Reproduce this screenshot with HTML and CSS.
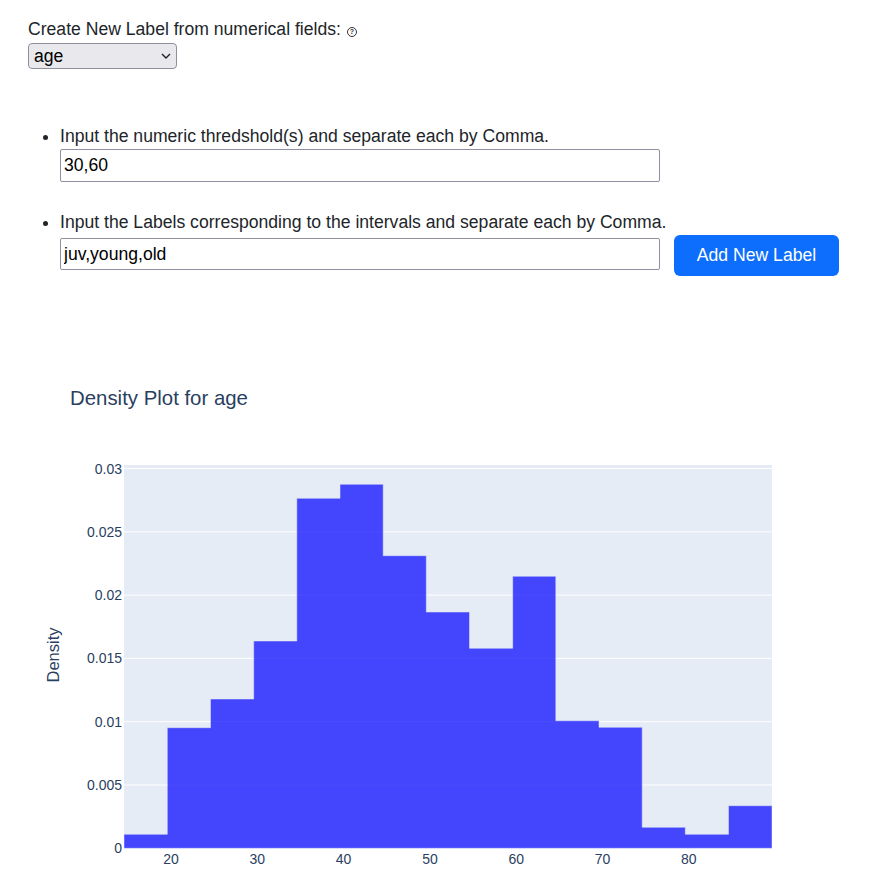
FILE: index.html
```html
<!DOCTYPE html>
<html lang="en">
<head>
<meta charset="utf-8">
<title>Create New Label</title>
<link rel="stylesheet" href="styles.css">
</head>
<body>
<main class="app">
  <section class="form">
    <label class="field-label" for="field">Create New Label from numerical fields: <span class="help">?</span></label>
    <div class="select-wrap">
      <select id="field" class="select">
        <option>age</option>
      </select>
      <svg class="chevron" width="10" height="6" viewBox="0 0 10 6"><path d="M1 1 L5 5 L9 1" fill="none" stroke="#222" stroke-width="1.4"/></svg>
    </div>
    <ul class="steps">
      <li class="step">
        <div class="step-text">Input the numeric thredshold(s) and separate each by Comma.</div>
        <input class="text-input" type="text" value="30,60">
      </li>
      <li class="step">
        <div class="step-text">Input the Labels corresponding to the intervals and separate each by Comma.</div>
        <div class="step-row">
          <input class="text-input" type="text" value="juv,young,old">
          <button class="btn">Add New Label</button>
        </div>
      </li>
    </ul>
  </section>
  <section class="chart">
    <svg class="plot" width="877" height="518" viewBox="0 0 877 518">
      <text class="title" x="70" y="45">Density Plot for age</text>
      <rect x="124" y="105" width="648" height="383.3" fill="#E5ECF6"/>
      <g stroke="#ffffff" stroke-width="1">
        <line x1="124" x2="772" y1="108.5" y2="108.5"/>
        <line x1="124" x2="772" y1="171.8" y2="171.8"/>
        <line x1="124" x2="772" y1="235.1" y2="235.1"/>
        <line x1="124" x2="772" y1="298.4" y2="298.4"/>
        <line x1="124" x2="772" y1="361.7" y2="361.7"/>
        <line x1="124" x2="772" y1="425" y2="425"/>
      </g>
      <path opacity="0.7" fill="#0000ff" stroke="#E5ECF6" stroke-width="0.5"
        d="M124 488.3 V474.3 H167.3 V367.7 H210.5 V339 H253.7 V281 H296.8 V138.3 H340 V124.3 H383.2 V195.7 H426.3 V252 H469.5 V288.3 H512.7 V216.3 H555.8 V360.7 H599 V367.3 H642.2 V467.3 H685.3 V474.3 H728.5 V445.7 H772 V488.3 Z"/>
      <g class="ytick" text-anchor="end">
        <text x="122" y="113.5">0.03</text>
        <text x="122" y="176.8">0.025</text>
        <text x="122" y="240.1">0.02</text>
        <text x="122" y="303.4">0.015</text>
        <text x="122" y="366.7">0.01</text>
        <text x="122" y="430">0.005</text>
        <text x="122" y="493.3">0</text>
      </g>
      <g class="xtick" text-anchor="middle">
        <text x="171" y="504">20</text>
        <text x="257.3" y="504">30</text>
        <text x="343.6" y="504">40</text>
        <text x="430" y="504">50</text>
        <text x="516.2" y="504">60</text>
        <text x="602.5" y="504">70</text>
        <text x="688.8" y="504">80</text>
      </g>
      <text class="ytitle" x="53" y="295" text-anchor="middle" transform="rotate(-90 53 295)" dy="6">Density</text>
    </svg>
  </section>
</main>
</body>
</html>
```
FILE: styles.css
```css
html, body {
  margin: 0;
  padding: 0;
  overflow: hidden;
  background: #ffffff;
}

body {
  font-family: "Liberation Sans", Arial, sans-serif;
  font-size: 17.6px;
  color: #212529;
}

.form {
  padding: 19px 28px 0;
  display: flex;
  flex-direction: column;
  align-items: flex-start;
}

.field-label {
  display: block;
  line-height: 21px;
  height: 21px;
}

.help {
  display: inline-block;
  width: 8px;
  height: 8px;
  border: 1px solid #333;
  border-radius: 50%;
  font-size: 7px;
  line-height: 8px;
  text-align: center;
  vertical-align: 1px;
  margin-left: 1px;
  color: #333;
  font-weight: bold;
}

.select-wrap {
  position: relative;
  margin-top: 3px;
  width: 149px;
  height: 26px;
}

.select {
  appearance: none;
  -webkit-appearance: none;
  width: 149px;
  height: 26px;
  box-sizing: border-box;
  background: #e9e9ed;
  border: 1px solid #8f8f9d;
  border-radius: 4px;
  font-family: "Liberation Sans", Arial, sans-serif;
  font-size: 17.6px;
  color: #000;
  padding: 0 0 0 5px;
  margin: 0;
}

.chevron {
  position: absolute;
  right: 6px;
  top: 10px;
  pointer-events: none;
}

.steps {
  margin: 56px 0 0;
  padding: 0 0 0 32px;
  list-style: disc;
}

.step {
  margin-bottom: 29px;
}

.step:last-child {
  margin-bottom: 0;
}

.step-text {
  line-height: 22px;
  height: 22px;
  color: #212529;
}

.text-input {
  display: block;
  box-sizing: border-box;
  width: 600px;
  height: 33px;
  margin: 2px 0 0;
  padding: 0 3px;
  border: 1px solid #8f8f9d;
  border-radius: 2px;
  font-family: "Liberation Sans", Arial, sans-serif;
  font-size: 17.6px;
  color: #000;
  background: #fff;
}

.step-row {
  display: flex;
  align-items: flex-start;
  gap: 14px;
  margin-top: 2px;
}

.step-row .text-input {
  margin-top: 3px;
  height: 32px;
}

.btn {
  box-sizing: border-box;
  width: 165px;
  height: 41px;
  padding: 0;
  border: none;
  border-radius: 6px;
  background: #0d6efd;
  color: #ffffff;
  font-family: "Liberation Sans", Arial, sans-serif;
  font-size: 17.6px;
}

.chart {
  margin-top: 84px;
}

.plot {
  display: block;
  font-family: "Liberation Sans", Arial, sans-serif;
}

.title {
  font-size: 20.4px;
  fill: #2a3f5f;
}

.ytick text,
.xtick text {
  font-size: 14px;
  fill: #2a3f5f;
}

.ytitle {
  font-size: 16.5px;
  fill: #2a3f5f;
}
```
